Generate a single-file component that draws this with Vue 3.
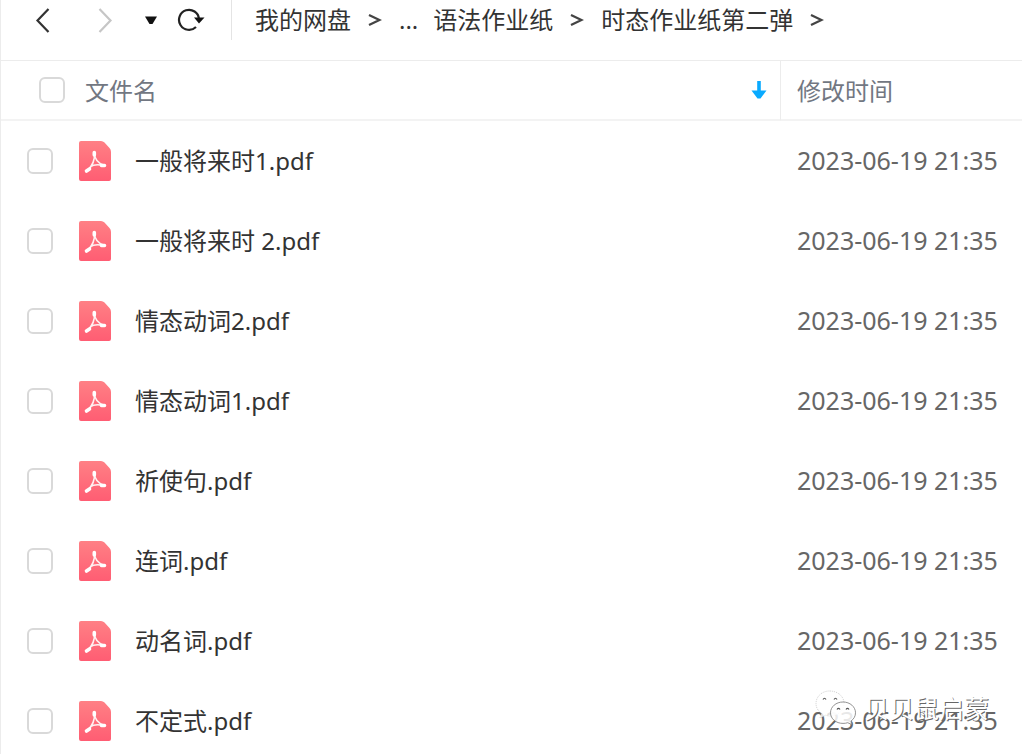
<script setup>
import { ref, computed } from 'vue'

const files = ref([
  '一般将来时1.pdf',
  '一般将来时 2.pdf',
  '情态动词2.pdf',
  '情态动词1.pdf',
  '祈使句.pdf',
  '连词.pdf',
  '动名词.pdf',
  '不定式.pdf',
].map((name) => ({ name, modified: '2023-06-19 21:35', selected: false })))

const crumbs = ['我的网盘', '语法作业纸', '时态作业纸第二弹']

const allSelected = computed({
  get: () => files.value.every((f) => f.selected),
  set: (value) => files.value.forEach((f) => { f.selected = value }),
})
</script>

<template>
  <main class="drive">
    <header class="toolbar">
      <div class="controls">
        <button type="button" class="tool" aria-label="后退">
          <svg width="16" height="28" viewBox="0 0 16 28"><path d="M13.5 3 2.5 14.5 13.5 26" fill="none" stroke="#333" stroke-width="2.2" /></svg>
        </button>
        <button type="button" class="tool forward" aria-label="前进">
          <svg width="16" height="28" viewBox="0 0 16 28"><path d="M2.5 3 13.5 14.5 2.5 26" fill="none" stroke="#c6c6c6" stroke-width="2.2" /></svg>
        </button>
        <button type="button" class="tool history" aria-label="历史记录">
          <svg width="12" height="28" viewBox="0 0 12 28"><path d="M0 10.5h12L7.5 18h-3z" fill="#111" /></svg>
        </button>
        <button type="button" class="tool refresh" aria-label="刷新">
          <svg width="28" height="28" viewBox="0 0 28 28">
            <path d="M22 13A10 10 0 1 0 19 21" fill="none" stroke="#222" stroke-width="2.2" />
            <path d="M17 11.5h10.5L22 17.5z" fill="#111" />
          </svg>
        </button>
      </div>
      <nav class="crumbs" aria-label="路径">
        <template v-for="(crumb, i) in crumbs" :key="crumb">
          <a href="#" class="crumb">{{ crumb }}</a>
          <svg class="sep" width="14" height="16" viewBox="0 0 14 16"><path d="M1 3 11.500 8 1 13" fill="none" stroke="#444" stroke-width="2.300" /></svg>
          <a v-if="i === 0" href="#" class="crumb more">...</a>
        </template>
      </nav>
    </header>

    <table class="files">
      <colgroup>
        <col>
        <col class="date-col">
      </colgroup>
      <thead>
        <tr>
          <th scope="col" class="name-head">
            <div class="head-cell">
              <label class="head-label">
                <input v-model="allSelected" type="checkbox" class="check">
                <span>文件名</span>
              </label>
              <button type="button" class="tool" aria-label="排序">
                <svg width="16" height="20" viewBox="0 0 16 20"><path d="M6.200 1h3.600v9.500h5.700L9.500 18.500h-3L.5 10.500h5.700z" fill="#09aaff" /></svg>
              </button>
            </div>
          </th>
          <th scope="col" class="date-head">修改时间</th>
        </tr>
      </thead>
      <tbody>
        <tr v-for="file in files" :key="file.name">
          <td>
            <label class="file">
              <input v-model="file.selected" type="checkbox" class="check">
              <svg class="pdf" width="32" height="40" viewBox="0 0 32 40">
                <defs>
                  <linearGradient id="pdf-fill" x1="0" y1="0" x2="0" y2="1">
                    <stop offset="0" stop-color="#ff8085" />
                    <stop offset="1" stop-color="#ff5d73" />
                  </linearGradient>
                </defs>
                <path d="M2 0H22Q24 0 25.500 1.500L30.500 7Q32 8.500 32 11V38Q32 40 30 40H2Q0 40 0 38V2Q0 0 2 0Z" fill="url(#pdf-fill)" />
                <g fill="none" stroke="#fff" stroke-linecap="round" stroke-linejoin="round">
                  <path d="M15.500 12C15.500 17.500 18 22 25.500 24.500M15.500 12C16 19 13.500 25 8 30M11.500 25.500C15 23 20 23.500 25.500 24.500" stroke-width="1.600" stroke-opacity=".9" />
                  <path d="M15.300 11.500v2.500M7.500 30l3-2M22.500 24.500h3" stroke-width="3.600" />
                </g>
              </svg>
              <span>{{ file.name }}</span>
            </label>
          </td>
          <td class="date">{{ file.modified }}</td>
        </tr>
      </tbody>
    </table>

    <div class="watermark">
      <svg width="42" height="36" viewBox="0 0 42 36">
        <path d="M14.500 1C7 1 1 6.500 1 13.500c0 4 2 7.500 5.500 9.800L5 28l5.500-2.800c2 .6 3 .8 4.500.8 8 0 14-5.500 14-12.500S23 1 14.500 1z" fill="#fff" fill-opacity=".8" stroke="#bbb" stroke-width=".7" stroke-dasharray="1 1" />
        <path d="M28 12c7 0 12.500 4.800 12.500 10.800 0 3.400-1.700 6.300-4.500 8.200l1 3.700-4.300-2c-1.500.5-3 .7-4.700.7-7 0-12.500-4.600-12.500-10.600S21 12 28 12z" fill="#fff" fill-opacity=".85" stroke="#777" stroke-width=".8" />
        <path d="M8 9.500q1.500-2.500 3 0M19 9.500q1.500-2.500 3 0M22 19.500q1.500-2.200 3 0M31 19.500q1.500-2.200 3 0" fill="none" stroke="#555" stroke-width="1.200" />
      </svg>
      <span>贝贝鼠启蒙</span>
    </div>
  </main>
</template>

<style>
body {
  margin: 0;
  overflow: hidden;
}
</style>

<style scoped>
.drive {
  position: relative;
  box-sizing: border-box;
  height: 100vh;
  overflow: hidden;
  border-left: 1px solid #ececec;
  background: #fff;
  color: #333;
  font-family: "Noto Sans", "Noto Sans CJK SC", sans-serif;
  font-size: 24px;
  line-height: 32px;
}

.toolbar {
  display: flex;
  align-items: center;
  box-sizing: border-box;
  height: 60px;
  padding-bottom: 20px;
}

.controls {
  display: flex;
  align-items: center;
  box-sizing: border-box;
  width: 231px;
  height: 40px;
  padding-left: 34px;
  border-right: 1px solid #e4e4e4;
}

.tool {
  display: flex;
  padding: 0;
  border: 0;
  background: none;
}

.forward {
  margin-left: 46px;
}

.history {
  margin-left: 32px;
}

.refresh {
  margin-left: 20px;
}

.crumbs {
  display: flex;
  align-items: center;
  gap: 17px;
  padding-left: 23px;
  white-space: nowrap;
}

.crumb {
  color: #333;
  text-decoration: none;
}

.more {
  margin-right: -2px;
}

.files {
  width: 100%;
  border-collapse: separate;
  border-spacing: 0;
  table-layout: fixed;
}

.date-col {
  width: 242px;
}

th,
td {
  box-sizing: border-box;
  height: 80px;
  padding: 0;
  font-weight: 400;
  text-align: left;
}

th {
  height: 61px;
  border-top: 1px solid #ececec;
  border-bottom: 2px solid #f3f3f3;
  color: #727782;
}

.date-head {
  padding: 2px 0 0 16px;
  border-left: 1px solid #ececec;
}

.head-cell {
  display: flex;
  align-items: center;
  justify-content: space-between;
  padding: 0 13px 0 38px;
}

.head-label {
  display: flex;
  align-items: center;
  gap: 20px;
}

.head-label span {
  padding-top: 2px;
}

.check {
  appearance: none;
  box-sizing: border-box;
  flex: none;
  width: 26px;
  height: 26px;
  margin: 0;
  border: 2px solid #d9d9d9;
  border-radius: 6px;
  background: #fff;
}

.check:checked {
  border-color: #09aaff;
  background: #09aaff;
}

.file {
  display: flex;
  align-items: center;
  padding-left: 26px;
}

.pdf {
  margin: 0 24px 0 26px;
}

.date {
  padding: 0 0 2px 17px;
  color: #666;
  font-size: 25px;
}

.watermark {
  position: absolute;
  right: 33px;
  bottom: 28px;
  display: flex;
  align-items: center;
  gap: 7px;
  color: #fff;
  font-size: 25px;
  text-shadow: 1px 1px 0 #666;
}
</style>
